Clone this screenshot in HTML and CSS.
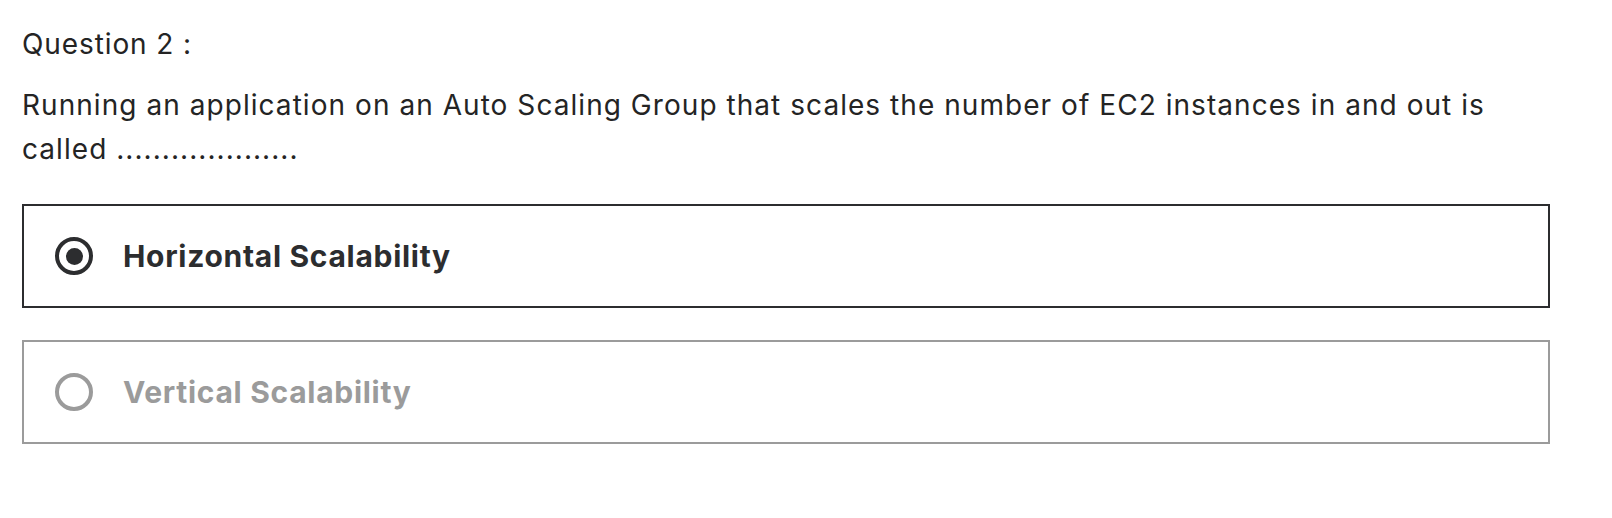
FILE: index.html
```html
<!DOCTYPE html>
<html lang="en">
<head>
<meta charset="utf-8">
<title>Question 2</title>
<link rel="stylesheet" href="styles.css">
</head>
<body>
<main class="quiz">
  <p class="q-title">Question 2 :</p>
  <p class="q-text">Running an application on an Auto Scaling Group that scales the number of EC2 instances in and out is called ....................</p>
  <div class="options">
    <label class="option selected">
      <span class="radio"><span class="dot"></span></span>
      <span class="opt-label">Horizontal Scalability</span>
    </label>
    <label class="option muted">
      <span class="radio"></span>
      <span class="opt-label">Vertical Scalability</span>
    </label>
  </div>
</main>
</body>
</html>
```

FILE: styles.css
```css
* { box-sizing: border-box; }
html, body { margin: 0; padding: 0; background: #fff; }
body {
  font-family: Inter, "Liberation Sans", Arial, sans-serif;
  color: #242424;
}
.quiz {
  width: 1550px;
  padding: 22px 0 0 22px;
}
.q-title {
  margin: 0;
  font-size: 28px;
  line-height: 44px;
  letter-spacing: 0.9px;
}
.q-text {
  margin: 17px 0 0;
  font-size: 28px;
  line-height: 44px;
  letter-spacing: 1.05px;
}
.options {
  margin-top: 33px;
  display: flex;
  flex-direction: column;
  gap: 32px;
}
.option {
  height: 104px;
  border: 2px solid #2c2d2f;
  display: flex;
  align-items: center;
  padding-left: 31px;
  gap: 30px;
  color: #2c2d2f;
}
.option.muted {
  border-color: #9b9b9b;
  color: #9b9b9b;
}
.radio {
  width: 38px;
  height: 38px;
  border: 4px solid currentColor;
  border-radius: 50%;
  display: flex;
  align-items: center;
  justify-content: center;
  flex: none;
}
.dot {
  width: 17px;
  height: 17px;
  border-radius: 50%;
  background: currentColor;
}
.opt-label {
  font-size: 30px;
  font-weight: 700;
  line-height: 40px;
  letter-spacing: 0.7px;
}
```
